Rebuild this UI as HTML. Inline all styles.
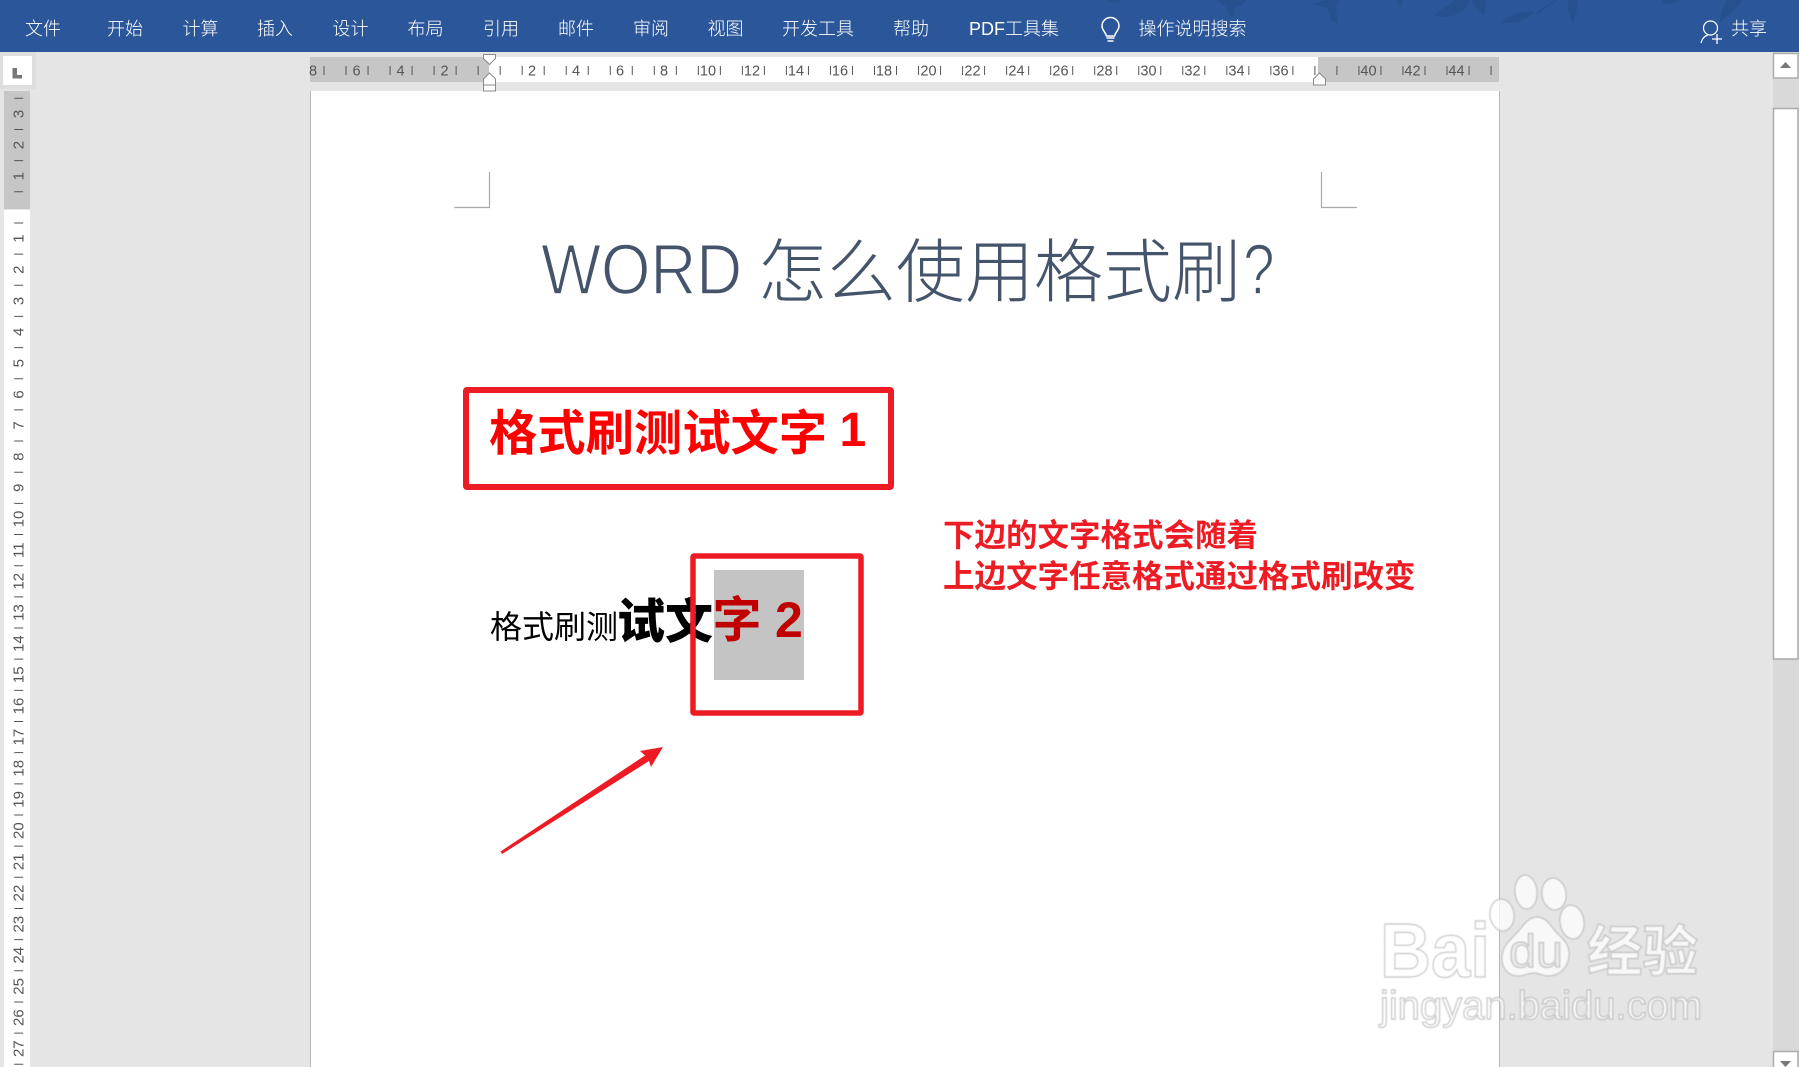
<!DOCTYPE html>
<html lang="zh-CN">
<head>
<meta charset="utf-8">
<title>WORD 怎么使用格式刷?</title>
<style>
html,body{margin:0;padding:0;width:1799px;height:1067px;overflow:hidden;background:#e5e5e5;}
body{position:relative;font-family:"Liberation Sans","Noto Sans CJK SC",sans-serif;}
.a{position:absolute;white-space:nowrap;}
.tab{position:absolute;top:3px;line-height:52px;font-size:18px;color:#fff;font-weight:300;white-space:nowrap;font-family:"Liberation Sans","Noto Sans CJK SC",sans-serif;}
#top{position:absolute;left:0;top:0;width:1799px;height:52px;background:#2b579a;overflow:hidden;}
.cjk{font-family:"Noto Sans CJK SC",sans-serif;}
svg{position:absolute;left:0;top:0;}
</style>
</head>
<body>
<div id="top">
<svg width="1799" height="52" viewBox="0 0 1799 52">
<g fill="#27508e">
<path d="M1107 0h15l-7 3z"/>
<path d="M1216 0h31l-6 6-7 2 1 8-6-1-3-8z"/>
<path d="M1312 4l12-4h16l-4 8 2 15-6-2-5-13z"/>
<path d="M1396 0h7l-3 8z"/>
<path d="M1434 16c6-8 14-9 20-16h16c-2 9-14 20-36 16z"/>
<path d="M1472 0h13c1 6 0 11-1 15-6-4-10-9-12-15z"/>
<path d="M1501 23c6-8 18-12 34-12-6 7-16 13-34 12z"/>
<path d="M1535 13c6-5 14-9 20-13h3c-7 4-14 10-21 15z"/>
<path d="M1568 0h9c1 9-2 18-4 24-4-7-6-16-5-24z"/>
<path d="M1662 0h18c-5 3-12 4-18 4z"/>
<path d="M1728 0h14c-4 8-12 14-22 22 0-8 3-16 8-22z"/>
</g>
</svg>
<span class="tab" style="left:25px">文件</span>
<span class="tab" style="left:107px">开始</span>
<span class="tab" style="left:182.500px">计算</span>
<span class="tab" style="left:257px">插入</span>
<span class="tab" style="left:332.500px">设计</span>
<span class="tab" style="left:407.500px">布局</span>
<span class="tab" style="left:483px">引用</span>
<span class="tab" style="left:558px">邮件</span>
<span class="tab" style="left:633px">审阅</span>
<span class="tab" style="left:707.500px">视图</span>
<span class="tab" style="left:782px">开发工具</span>
<span class="tab" style="left:893px">帮助</span>
<span class="tab" style="left:969px">PDF工具集</span>
<span class="tab" style="left:1138.500px">操作说明搜索</span>
<span class="tab" style="left:1731px">共享</span>
<svg width="1799" height="52" viewBox="0 0 1799 52">
<g fill="none" stroke="#fff" stroke-width="1.5">
<path d="M1106.500 36c-1-4-4.500-6-4.500-10a8.500 8.500 0 0 1 17 0c0 4-3.500 6-4.500 10z"/>
<path d="M1106.500 38h8M1107.500 41h6" stroke-width="1.6"/>
<circle cx="1710.5" cy="28" r="7" stroke-width="1.2"/>
<path d="M1701 43c1-4 3-7 7-8" stroke-width="1.2"/>
<path d="M1717 34v10M1712 39h10" stroke-width="1.3"/>
</g>
</svg>
</div>

<!-- corner tab -->
<div class="a" style="left:0;top:52px;width:36px;height:37px;background:#dedede"></div>
<div class="a" style="left:3px;top:56px;width:29px;height:29px;background:#fff"></div>
<svg width="40" height="90" viewBox="0 0 40 90"><path d="M12.500 68h4.500v7h5v3.500h-9.500z" fill="#777"/></svg>

<!-- horizontal ruler -->
<div class="a" style="left:310px;top:57px;width:1189px;height:25px;background:#c6c6c6"></div>
<div class="a" style="left:489px;top:57px;width:829px;height:25px;background:#fff"></div>
<!-- page -->
<div class="a" style="left:310px;top:91px;width:1188px;height:976px;background:#fff;border-left:1px solid #b8b8b8;border-right:1px solid #b8b8b8"></div>

<svg width="1799" height="1067" viewBox="0 0 1799 1067" style="font-family:'Liberation Sans',sans-serif">
<line x1="323.5" y1="70.5" x2="1492" y2="70.5" stroke="#555" stroke-width="9" stroke-dasharray="1 21.02"/>
<g font-size="14.5" fill="#555" text-anchor="middle">
<text x="313" y="75.5">8</text><text x="356.5" y="75.5">6</text><text x="400.5" y="75.5">4</text><text x="444.5" y="75.5">2</text>
<text x="532" y="75.5">2</text><text x="576" y="75.5">4</text><text x="620" y="75.5">6</text><text x="664" y="75.5">8</text>
<text x="708" y="75.5">10</text><text x="752" y="75.5">12</text><text x="796" y="75.5">14</text><text x="840" y="75.5">16</text>
<text x="884" y="75.5">18</text><text x="928.5" y="75.5">20</text><text x="972.5" y="75.5">22</text><text x="1016.5" y="75.5">24</text>
<text x="1060.5" y="75.5">26</text><text x="1104.5" y="75.5">28</text><text x="1148.5" y="75.5">30</text><text x="1192.5" y="75.5">32</text>
<text x="1236.5" y="75.5">34</text><text x="1280.5" y="75.5">36</text><text x="1368.5" y="75.5">40</text><text x="1412.5" y="75.5">42</text><text x="1456.5" y="75.5">44</text>
</g>
<!-- indent markers -->
<g fill="#fff" stroke="#8a8a8a" stroke-width="1">
<path d="M483.5 54.5h12v4l-6 6-6-6z"/>
<path d="M489.5 73l6 6v6h-12v-6z"/>
<rect x="483.5" y="85" width="12" height="6"/>
<path d="M1313.500 85v-6l6-6 6 6v6z" fill="#fff"/>
</g>
<!-- vertical ruler -->
<rect x="4" y="91" width="26" height="118" fill="#c6c6c6"/>
<rect x="4" y="210" width="26" height="857" fill="#fff"/>
<line x1="18.7" y1="97.8" x2="18.7" y2="1067" stroke="#555" stroke-width="9" stroke-dasharray="1 30.16"/>
<g font-size="15" fill="#555" text-anchor="middle">
<text transform="translate(23.5,113.9) rotate(-90)">3</text>
<text transform="translate(23.5,145.1) rotate(-90)">2</text>
<text transform="translate(23.5,176.2) rotate(-90)">1</text>
<text transform="translate(23.5,238.6) rotate(-90)">1</text>
<text transform="translate(23.5,269.7) rotate(-90)">2</text>
<text transform="translate(23.5,300.9) rotate(-90)">3</text>
<text transform="translate(23.5,332) rotate(-90)">4</text>
<text transform="translate(23.5,363.2) rotate(-90)">5</text>
<text transform="translate(23.5,394.4) rotate(-90)">6</text>
<text transform="translate(23.5,425.5) rotate(-90)">7</text>
<text transform="translate(23.5,456.7) rotate(-90)">8</text>
<text transform="translate(23.5,487.8) rotate(-90)">9</text>
<text transform="translate(23.5,519) rotate(-90)">10</text>
<text transform="translate(23.5,550.2) rotate(-90)">11</text>
<text transform="translate(23.5,581.3) rotate(-90)">12</text>
<text transform="translate(23.5,612.5) rotate(-90)">13</text>
<text transform="translate(23.5,643.6) rotate(-90)">14</text>
<text transform="translate(23.5,674.8) rotate(-90)">15</text>
<text transform="translate(23.5,706) rotate(-90)">16</text>
<text transform="translate(23.5,737.1) rotate(-90)">17</text>
<text transform="translate(23.5,768.3) rotate(-90)">18</text>
<text transform="translate(23.5,799.4) rotate(-90)">19</text>
<text transform="translate(23.5,830.6) rotate(-90)">20</text>
<text transform="translate(23.5,861.8) rotate(-90)">21</text>
<text transform="translate(23.5,893) rotate(-90)">22</text>
<text transform="translate(23.5,924.1) rotate(-90)">23</text>
<text transform="translate(23.5,955.2) rotate(-90)">24</text>
<text transform="translate(23.5,986.4) rotate(-90)">25</text>
<text transform="translate(23.5,1017.6) rotate(-90)">26</text>
<text transform="translate(23.5,1048.7) rotate(-90)">27</text>
</g>
<!-- scrollbar -->
<rect x="1773" y="52" width="26" height="1015" fill="#d9d9d9"/>
<rect x="1773.5" y="53.5" width="24.5" height="24.5" fill="#fff" stroke="#ababab" stroke-width="1.5"/>
<rect x="1773.5" y="108.5" width="24.5" height="550.5" fill="#fff" stroke="#ababab" stroke-width="1.5"/>
<rect x="1773.5" y="1051.5" width="24.5" height="20" fill="#fff" stroke="#ababab" stroke-width="1.5"/>
<path d="M1780 68l5.500-6 5.500 6z" fill="#777"/>
<path d="M1780 1061l5.500 6 5.500-6z" fill="#777"/>
<!-- crop marks -->
<path d="M454 207.500h35.500V172M1321.500 172v35.500H1357" fill="none" stroke="#aaa" stroke-width="1.2"/>
<!-- red boxes -->
<rect x="466" y="390" width="425" height="97" rx="1" fill="none" stroke="#ed1c24" stroke-width="6" stroke-linejoin="round"/>
<rect x="714" y="570" width="90" height="110" fill="#c4c4c4"/>
</svg>

<!-- title -->
<span class="a" style="left:540.500px;top:231px;font:71px/80px 'Liberation Sans',sans-serif;color:#44546a;transform-origin:0 0;transform:scaleX(.895);-webkit-text-stroke:1.6px #fff">WORD</span>
<span class="a cjk" style="left:758px;top:221px;font-size:69px;line-height:90px;color:#44546a;font-weight:300">怎么使用格式刷</span>
<span class="a" style="left:1243px;top:231px;font:71px/80px 'Liberation Sans',sans-serif;color:#44546a;transform-origin:0 0;transform:scaleX(.8);-webkit-text-stroke:1.6px #fff">?</span>

<!-- box 1 text -->
<span class="a cjk" style="left:489px;top:394px;font-size:48.300px;line-height:70px;font-weight:700;color:#f00">格式刷测试文字</span>
<span class="a" style="left:839.500px;top:396px;font:700 48px/70px 'Liberation Sans',sans-serif;color:#f00">1</span>

<!-- line 2 -->
<span class="a cjk" style="left:490px;top:602px;font-size:32px;line-height:46px;color:#000;font-weight:400">格式刷测</span>
<span class="a cjk" style="left:617px;top:582px;font-size:48px;line-height:70px;color:#000;font-weight:900">试文</span>
<span class="a cjk" style="left:712.500px;top:582px;font-size:49px;line-height:70px;color:#c00000;font-weight:700">字</span>
<span class="a" style="left:775px;top:585px;font:700 50px/70px 'Liberation Sans',sans-serif;color:#c00000">2</span>

<!-- note -->
<span class="a cjk" style="left:943px;top:510px;font-size:31.500px;line-height:46px;font-weight:700;color:#ed1c24">下边的文字格式会随着</span>
<span class="a cjk" style="left:943px;top:551px;font-size:31.500px;line-height:46px;font-weight:700;color:#ed1c24">上边文字任意格式通过格式刷改变</span>

<svg width="1799" height="1067" viewBox="0 0 1799 1067">
<rect x="693" y="556" width="168" height="157" rx="1" fill="none" stroke="#ed1c24" stroke-width="5.500" stroke-linejoin="round"/>
<path d="M500.500 851.500L645 755.500 640 751 663 747 651 767 649 761 502 854Z" fill="#ed1c24"/>
<!-- watermark -->
<defs><filter id="b" x="-5%" y="-5%" width="110%" height="110%"><feGaussianBlur stdDeviation=".45"/></filter></defs>
<g filter="url(#b)" fill="#fff" fill-opacity=".72" stroke="#b0b0b0" stroke-opacity=".65" stroke-width="1.4">
<text x="1380" y="977" font-family="'Liberation Sans',sans-serif" font-weight="700" font-size="77" textLength="110" lengthAdjust="spacingAndGlyphs">Bai</text>
<ellipse cx="1502" cy="915" rx="12" ry="16" transform="rotate(-8 1502 915)"/>
<ellipse cx="1526" cy="892" rx="11" ry="17" transform="rotate(-5 1526 892)"/>
<ellipse cx="1554" cy="894" rx="12" ry="16" transform="rotate(-8 1554 894)"/>
<ellipse cx="1572" cy="922" rx="12" ry="17" transform="rotate(-8 1572 922)"/>
<path d="M1537 917c10 0 14 10 20 16 7 7 13 12 12 23-1 12-10 20-21 20-5 0-9-3-14-3-6 0-10 3-16 3-11 0-17-10-16-20 1-10 7-15 13-21 7-7 12-18 22-18z"/>
<text x="1509" y="967" font-family="'Liberation Sans',sans-serif" font-size="46" textLength="54" lengthAdjust="spacingAndGlyphs" fill="#e8e8e8">du</text>
<text x="1587" y="971" font-family="'Noto Sans CJK SC',sans-serif" font-weight="700" font-size="55" textLength="111" lengthAdjust="spacingAndGlyphs">经验</text>
<text x="1380" y="1019" font-family="'Liberation Sans',sans-serif" font-size="40" textLength="322" lengthAdjust="spacingAndGlyphs">jingyan.baidu.com</text>
</g>
</svg>
</body>
</html>
